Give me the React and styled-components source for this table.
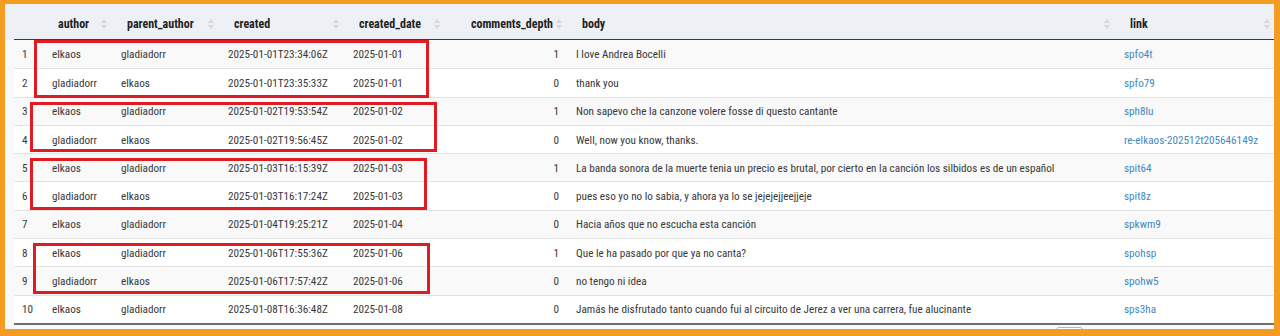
import React from 'react'
import styled, { createGlobalStyle } from 'styled-components'

const GlobalStyle = createGlobalStyle`
  body {
    margin: 0;
    font-family: "Roboto Condensed", "Liberation Sans", sans-serif;
    color: #333;
  }
`

const COLS = '28px 69px 107px 125px 101px 122px 548px 1fr'

const Frame = styled.div`
  position: relative;
  width: 1280px;
  height: 336px;
  box-sizing: border-box;
  border-style: solid;
  border-color: #f39c21;
  border-width: 4px 6px 7px 5px;
  background: #f9f9f9;
  overflow: hidden;
`

const HeadBar = styled.div`
  height: 36px;
  box-sizing: border-box;
  padding-left: 9px;
  background: #edf1f6;
`

const HeadRow = styled.div`
  display: grid;
  grid-template-columns: ${COLS};
  height: 36px;
  box-sizing: border-box;
  border-bottom: 1px solid #3a3a3a;
`

const HeadCell = styled.div`
  display: flex;
  align-items: center;
  justify-content: ${p => (p.$right ? 'flex-end' : 'flex-start')};
  gap: 3px;
  padding: 5px 4px 0 16px;
  font-size: 12px;
  font-weight: 700;
  color: #222;
`

const HeadLabel = styled.span`
  flex: ${p => (p.$right ? '0 0 auto' : '1 1 auto')};
`

const Body = styled.div`
  margin-left: 9px;
  border-bottom: 2px solid #707070;
`

const Row = styled.div`
  display: grid;
  grid-template-columns: ${COLS};
  height: 28.3px;
  box-sizing: border-box;
  background: ${p => (p.$odd ? '#f9f9f9' : '#ffffff')};
  border-top: ${p => (p.$first ? 'none' : '1px solid #e2e2e2')};
`

const Cell = styled.div`
  display: flex;
  align-items: center;
  justify-content: ${p => (p.$right ? 'flex-end' : 'flex-start')};
  padding: 1px ${p => (p.$right ? '7px' : '0')} 0 ${p => p.$pl || '10px'};
  font-size: 11.2px;
  color: #383838;
  white-space: nowrap;
  overflow: hidden;
`

const Link = styled.a`
  color: #4289c0;
  text-decoration: none;
`

const Footer = styled.div`
  display: flex;
  justify-content: flex-end;
  padding: 2px 191px 0 0;
`

const PageBox = styled.div`
  width: 27px;
  height: 20px;
  box-sizing: border-box;
  border: 1px solid #b4b4b4;
  border-radius: 3px;
  background: #fdfdfd;
`

const Highlight = styled.div`
  position: absolute;
  left: ${p => p.$x - 5}px;
  top: ${p => p.$y - 4}px;
  width: ${p => p.$w}px;
  height: ${p => p.$h}px;
  box-sizing: border-box;
  border: 3px solid #e11b22;
  pointer-events: none;
`

const SortIcon = () => (
  <svg width="6" height="10" viewBox="0 0 6 10">
    <path d="M3 0 L6 4 L0 4 Z" fill="#d3d8de" />
    <path d="M3 10 L6 6 L0 6 Z" fill="#d3d8de" />
  </svg>
)

const columns = [
  { key: 'author', label: 'author' },
  { key: 'parent', label: 'parent_author' },
  { key: 'created', label: 'created' },
  { key: 'date', label: 'created_date' },
  { key: 'depth', label: 'comments_depth', right: true },
  { key: 'body', label: 'body' },
  { key: 'link', label: 'link' },
]

const rows = [
  ['elkaos', 'gladiadorr', '2025-01-01T23:34:06Z', '2025-01-01', 1, 'I love Andrea Bocelli', 'spfo4t'],
  ['gladiadorr', 'elkaos', '2025-01-01T23:35:33Z', '2025-01-01', 0, 'thank you', 'spfo79'],
  ['elkaos', 'gladiadorr', '2025-01-02T19:53:54Z', '2025-01-02', 1, 'Non sapevo che la canzone volere fosse di questo cantante', 'sph8lu'],
  ['gladiadorr', 'elkaos', '2025-01-02T19:56:45Z', '2025-01-02', 0, 'Well, now you know, thanks.', 're-elkaos-202512t205646149z'],
  ['elkaos', 'gladiadorr', '2025-01-03T16:15:39Z', '2025-01-03', 1, 'La banda sonora de la muerte tenia un precio es brutal, por cierto en la canción los silbidos es de un español', 'spit64'],
  ['gladiadorr', 'elkaos', '2025-01-03T16:17:24Z', '2025-01-03', 0, 'pues eso yo no lo sabia, y ahora ya lo se jejejejjeejjeje', 'spit8z'],
  ['elkaos', 'gladiadorr', '2025-01-04T19:25:21Z', '2025-01-04', 0, 'Hacia años que no escucha esta canción', 'spkwm9'],
  ['elkaos', 'gladiadorr', '2025-01-06T17:55:36Z', '2025-01-06', 1, 'Que le ha pasado por que ya no canta?', 'spohsp'],
  ['gladiadorr', 'elkaos', '2025-01-06T17:57:42Z', '2025-01-06', 0, 'no tengo ni idea', 'spohw5'],
  ['elkaos', 'gladiadorr', '2025-01-08T16:36:48Z', '2025-01-08', 0, 'Jamás he disfrutado tanto cuando fui al circuito de Jerez a ver una carrera, fue alucinante', 'sps3ha'],
]

// pairs of comment + reply, marked in red
const highlights = [
  { x: 34, y: 40, w: 395, h: 58 },
  { x: 30, y: 102, w: 407, h: 50 },
  { x: 30, y: 158, w: 397, h: 52 },
  { x: 33, y: 243, w: 397, h: 51 },
]

const App = () => {
  return (
    <>
      <GlobalStyle />
      <Frame>
        <HeadBar>
          <HeadRow>
            <HeadCell />
            {columns.map(col => (
              <HeadCell key={col.key} $right={col.right}>
                <HeadLabel $right={col.right}>{col.label}</HeadLabel>
                <SortIcon />
              </HeadCell>
            ))}
          </HeadRow>
        </HeadBar>
        <Body>
          {rows.map((r, i) => (
            <Row key={i} $odd={i % 2 === 0} $first={i === 0}>
              <Cell $pl="8px">{i + 1}</Cell>
              <Cell>{r[0]}</Cell>
              <Cell>{r[1]}</Cell>
              <Cell>{r[2]}</Cell>
              <Cell>{r[3]}</Cell>
              <Cell $right>{r[4]}</Cell>
              <Cell>{r[5]}</Cell>
              <Cell>
                <Link href="#">{r[6]}</Link>
              </Cell>
            </Row>
          ))}
        </Body>
        <Footer>
          <PageBox />
        </Footer>
        {highlights.map((h, i) => (
          <Highlight key={i} $x={h.x} $y={h.y} $w={h.w} $h={h.h} />
        ))}
      </Frame>
    </>
  )
}

export default App
